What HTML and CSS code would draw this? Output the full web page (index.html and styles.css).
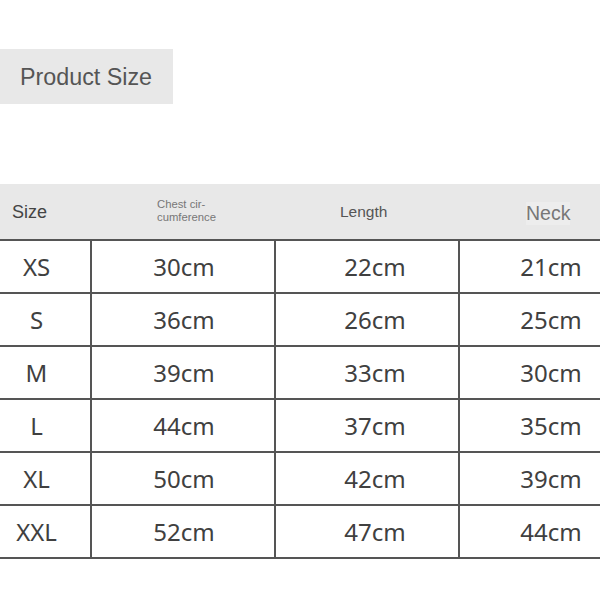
FILE: index.html
```html
<!DOCTYPE html>
<html>
<head>
<meta charset="utf-8">
<link rel="stylesheet" href="styles.css">
</head>
<body>
<div class="title">Product Size</div>
<div class="table">
  <div class="head">
    <div class="h h-size">Size</div>
    <div class="h h-chest">Chest cir-<br>cumference</div>
    <div class="h h-length">Length</div>
    <div class="h h-neck"><span>Neck</span></div>
  </div>
  <div class="row"><div class="c c0">XS</div><div class="c c1">30cm</div><div class="c c2">22cm</div><div class="c c3">21cm</div></div>
  <div class="row"><div class="c c0">S</div><div class="c c1">36cm</div><div class="c c2">26cm</div><div class="c c3">25cm</div></div>
  <div class="row"><div class="c c0">M</div><div class="c c1">39cm</div><div class="c c2">33cm</div><div class="c c3">30cm</div></div>
  <div class="row"><div class="c c0">L</div><div class="c c1">44cm</div><div class="c c2">37cm</div><div class="c c3">35cm</div></div>
  <div class="row"><div class="c c0">XL</div><div class="c c1">50cm</div><div class="c c2">42cm</div><div class="c c3">39cm</div></div>
  <div class="row"><div class="c c0">XXL</div><div class="c c1">52cm</div><div class="c c2">47cm</div><div class="c c3">44cm</div></div>
</div>
</body>
</html>
```
FILE: styles.css
```css
html, body {
  margin: 0;
  padding: 0;
  background: #fff;
}
body {
  width: 600px;
  font-family: "Liberation Sans", Arial, sans-serif;
}
.title {
  margin-top: 49px;
  width: 153px;
  height: 54px;
  padding-left: 20px;
  background: #e8e8e8;
  color: #555;
  font-size: 23.3px;
  display: flex;
  align-items: center;
  padding-top: 1px;
  box-sizing: content-box;
}
.table {
  margin-top: 80px;
}
.head {
  display: grid;
  grid-template-columns: 90px 184px 184px 142px;
  height: 55px;
  background: #e8e8e8;
  border-bottom: 2px solid #555;
}
.h {
  display: flex;
  align-items: center;
}
.h-size {
  padding-left: 12px;
  padding-top: 2px;
  font-size: 18px;
  color: #444;
}
.h-chest {
  padding-left: 67px;
  font-size: 11.3px;
  line-height: 13px;
  color: #777;
  padding-bottom: 1px;
}
.h-length {
  padding-left: 66px;
  font-size: 15.5px;
  color: #555;
}
.h-neck {
  padding-left: 68px;
  padding-top: 3px;
  font-size: 19.5px;
  color: #777;
}
.h-neck span {
  background: #ededed;
}
.row {
  display: grid;
  grid-template-columns: 90px 184px 184px 142px;
  height: 51px;
  border-bottom: 2px solid #555;
}
.c {
  display: flex;
  align-items: center;
  justify-content: center;
  font-family: "Noto Sans", "Open Sans", sans-serif;
  font-size: 24px;
  color: #404040;
}
.c1, .c2, .c3 {
  border-left: 2px solid #555;
}
.c0 {
  padding-right: 17px;
}
.c1 {
  padding-left: 2px;
}
.c2 {
  padding-left: 16px;
}
.c3 {
  padding-left: 42px;
}
```
